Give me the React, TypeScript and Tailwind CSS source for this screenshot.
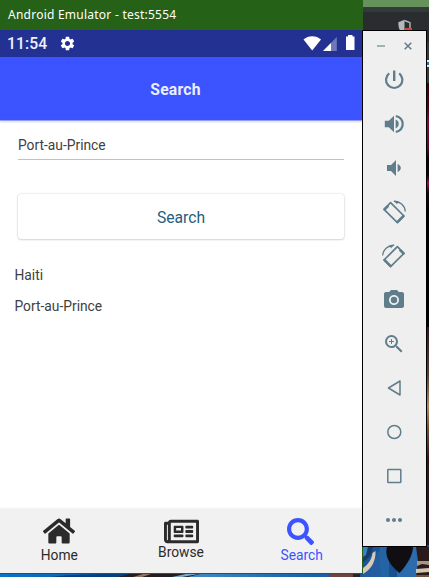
import type { ReactNode } from "react";
import { FaHome, FaRegNewspaper, FaSearch } from "react-icons/fa";
import { MdPhotoCamera, MdSettings, MdZoomIn } from "react-icons/md";

function Wallpaper() {
  return (
    <svg className="absolute inset-0" width="429" height="577" viewBox="0 0 429 577">
      <defs>
        <linearGradient id="sea" x1="0" x2="1" y1="0" y2="0">
          <stop offset="0" stopColor="#0b72c4" />
          <stop offset="0.28" stopColor="#0a5eaa" />
          <stop offset="0.4" stopColor="#4c8fc6" />
          <stop offset="0.7" stopColor="#1c63a8" />
          <stop offset="1" stopColor="#174a86" />
        </linearGradient>
        <linearGradient id="edge" x1="0" x2="0" y1="0" y2="1">
          <stop offset="0" stopColor="#3c0005" />
          <stop offset="0.1" stopColor="#4a0410" />
          <stop offset="0.16" stopColor="#7b0f3a" />
          <stop offset="0.27" stopColor="#5a0826" />
          <stop offset="0.31" stopColor="#0c0206" />
          <stop offset="0.38" stopColor="#0a0508" />
          <stop offset="0.41" stopColor="#9c1036" />
          <stop offset="0.45" stopColor="#16060a" />
          <stop offset="0.52" stopColor="#000000" />
          <stop offset="1" stopColor="#000000" />
        </linearGradient>
        <linearGradient id="wood" x1="0" x2="0" y1="0" y2="1">
          <stop offset="0" stopColor="#2c1c1c" />
          <stop offset="0.22" stopColor="#5a4034" />
          <stop offset="0.36" stopColor="#b08a62" />
          <stop offset="0.46" stopColor="#7a4e36" />
          <stop offset="0.6" stopColor="#34161a" />
          <stop offset="1" stopColor="#26161a" />
        </linearGradient>
      </defs>
      <rect width="429" height="577" fill="#000" />
      <rect x="360" width="69" height="7" fill="#64925a" />
      <rect x="360" y="7" width="69" height="5" fill="#34393c" />
      <rect x="360" y="12" width="69" height="71" fill="#292d30" />
      <rect x="427" y="42" width="2" height="41" fill="#343b40" />
      <rect x="427" y="60" width="2" height="7" fill="#e8f0e0" />
      <rect x="427" y="62" width="2" height="3" fill="#2a6cb0" />
      <rect x="427" y="83" width="2" height="244" fill="url(#edge)" />
      <rect x="427" y="327" width="2" height="220" fill="url(#wood)" />
      <path d="M398.300 22.300 404.500 19.800v11.200h-4c-1.500-2-2.200-4-2.200-8.700Z" fill="#b4b9bc" />
      <path d="M404.500 20.500 410 22.700v5.300" fill="none" stroke="#b4b9bc" strokeWidth="1.400" />
      <rect x="405" y="28" width="7" height="3" fill="#dd4438" />
      <rect y="545" width="429" height="32" fill="url(#sea)" />
      <path d="M50 577c25-3 48-3 75-3h12l-10 3Z" fill="#063f7d" />
      <path d="M118 577l12-3h70l-12 3Z" fill="#241c22" />
      <path d="M133 577l10-3h8l-9 3Z" fill="#8f7566" />
      <path d="M172 577l14-3h12l-16 3Z" fill="#7aa9d2" />
      <path d="M330 577v-3h23v3Z" fill="#6a4440" />
      <path d="M353 577v-3h7v3Z" fill="#27242c" />
      <path d="M363 547h10c-2 9-5 12-10 15Z" fill="#173a66" />
      <path d="M363 547h5l-2 8-3 2Z" fill="#3483c4" />
      <path d="M363 574c6-4 12-12 14-22l11-5v30h-25Z" fill="#245c9f" />
      <path d="M375.500 551c.5 10-4 18-12.500 23v-6c6-4 9-10 9.500-15Z" fill="#d9cbb8" />
      <path d="M380 547h9v30h-7c-3-8-3-20-2-30Z" fill="#2464a4" />
      <path d="M397 571c8-7 13-15 16-24h5v30h-21Z" fill="#2d6cac" />
      <path d="M387 547h26c0 8-6 18-13.500 26-5-4-16-14-12.500-26Z" fill="#100e12" />
      <path d="M416 547h13v30h-13l2-16Z" fill="#2b1a1b" />
      <path d="M417 561h12v4l-7-1-5 2Z" fill="#a69783" />
      <path d="M416 569l13-1v4l-13 1Z" fill="#d5c7b2" />
      <path d="M416 575h13v2h-13Z" fill="#75543f" />
    </svg>
  );
}

function StatusBar() {
  return (
    <div className="flex h-[27px] shrink-0 items-center bg-[#233193] px-[7px] text-white">
      <span className="w-[41px] whitespace-nowrap text-[15.7px] font-medium leading-[27px] tracking-[0.1px] text-[#f0f1fa]">11:54</span>
      <MdSettings className="ml-[11px] size-[17px]" />
      <div className="flex-1" />
      <svg width="52" height="20" viewBox="0 0 52 20">
        <path d="M.5 5.500C5 1 13.500 1 18 5.500L9.200 16.500Z" fill="#fff" />
        <path d="M20 17 33.800 3v14Z" fill="#6e77b8" />
        <path d="M20 17 28 9v8Z" fill="#fff" />
        <path d="M43 2.500h2V1h4.500v1.500h2V16H43Z" fill="#fff" />
      </svg>
    </div>
  );
}

function Tab({ icon, label, className }: { icon: ReactNode; label: string; className: string }) {
  return (
    <div className={"flex flex-1 flex-col items-center " + className}>
      {icon}
      <span className="text-[13.8px] leading-[16px]">{label}</span>
    </div>
  );
}

function Phone() {
  return (
    <div className="absolute left-0 top-0 flex h-[574px] w-[363px] flex-col border-b border-r border-[#286018] bg-white font-['Roboto',sans-serif]">
      <div className="flex h-[30px] shrink-0 items-center bg-[#256117] pl-2 font-['Noto_Sans',sans-serif] text-[12px] text-white">
        <span className="whitespace-nowrap tracking-[0.24px]">Android Emulator - test:5554</span>
      </div>
      <StatusBar />
      <header className="flex h-16 shrink-0 items-center justify-center border-b border-[#919dff] bg-[#3b54ff] pr-[11px] pt-[2px] text-[15.7px] font-bold text-[#eceeff] shadow-[0_1px_2px_rgba(0,0,0,0.15)]">
        <span className="tracking-[0.2px]">Search</span>
      </header>
      <main className="flex flex-1 flex-col text-[13.8px] leading-4 text-[#404040]">
        <div className="mx-[18px] mt-4 flex h-[23px] items-start border-b border-[#bec2c3]">Port-au-Prince</div>
        <button className="mx-[18px] mt-[34px] flex h-[45px] items-center justify-center rounded-[3px] bg-white pt-[2px] text-[15.7px] text-[#24607c] shadow-[0_0_2px_rgba(0,0,0,0.22),0_1px_2px_rgba(0,0,0,0.12)]">
          Search
        </button>
        <p className="ml-[14.5px] mt-[28px]">Haiti</p>
        <p className="ml-[14.5px] mt-[15px]">Port-au-Prince</p>
      </main>
      <nav className="flex h-[64px] shrink-0 bg-[#f1f1f1] text-[#2b2b2b] shadow-[0_-1px_2px_rgba(0,0,0,0.06)]">
        <Tab className="pr-[3px] pt-[6px]" label="Home" icon={<FaHome className="size-8" />} />
        <Tab className="pr-[2px] pt-[5px]" label="Browse" icon={<FaRegNewspaper className="-mb-[5px] size-[35px]" />} />
        <Tab className="pr-[1px] pt-[9px] text-[#3b54ff]" label="Search" icon={<FaSearch className="mb-[2px] size-[27px] -translate-x-px" />} />
      </nav>
    </div>
  );
}

function Glyph({ children, className = "" }: { children: ReactNode; className?: string }) {
  return (
    <svg className={"size-6 " + className} viewBox="0 0 24 24" fill="none" stroke="currentColor">
      {children}
    </svg>
  );
}

function Rotate({ flip = false }: { flip?: boolean }) {
  return (
    <Glyph className={flip ? "-scale-x-100" : ""}>
      <path d="M2 9.300 8.600 2.700 22 16 15.400 22.600Z" strokeWidth="1.700" strokeLinejoin="round" />
      <path d="M2.600 9.300 5.600 6.300M15.600 21.900 21.300 16.200" strokeWidth="2.600" strokeLinecap="round" />
      <path d="M11.800 1.300C17.500.8 23 5.500 23.300 11.500" strokeWidth="1.300" />
      <path d="M12 1.100 14.700 3.800 17 2.300Z" fill="currentColor" strokeWidth=".4" />
    </Glyph>
  );
}

function Tool({ children }: { children: ReactNode }) {
  return <div className="flex h-11 shrink-0 items-center justify-center">{children}</div>;
}

function Toolbar() {
  return (
    <aside className="absolute left-[362px] top-[30px] flex h-[517px] w-[65px] flex-col border border-black bg-[#efefef] text-[#607d8b]">
      <div className="flex h-[27px] shrink-0 items-center gap-[19px] pl-[14px] pt-[3px]">
        <div className="h-0.5 w-2 bg-[#a1b1b8]" />
        <svg width="8" height="8" viewBox="0 0 8 8" fill="none" stroke="currentColor" strokeWidth="1.500">
          <path d="M.7.7 7.300 7.300M7.300.7.7 7.300" />
        </svg>
      </div>
      <div className="flex flex-col pr-[2px]">
        <Tool>
          <Glyph>
            <path d="M12.200 2.500v10.500" strokeWidth="2.400" />
            <path d="M7.200 5.300a8.200 8.200 0 1 0 10 0" strokeWidth="2.200" />
          </Glyph>
        </Tool>
        <Tool>
          <Glyph>
            <path d="M2.800 8.700h4L12 3.700v16.600L6.800 15.300h-4Z" fill="currentColor" stroke="none" />
            <path d="M13.600 7.600c4.200 1.600 4.200 7.200 0 8.800Z" fill="currentColor" stroke="none" />
            <path d="M13.800 4c9.200 2.400 9.200 13.600 0 16" strokeWidth="2.200" />
          </Glyph>
        </Tool>
        <Tool>
          <Glyph>
            <path d="M5 9h4l5-5v16l-5-5H5Z" fill="currentColor" stroke="none" />
            <path d="M15.600 8c4.200 1.500 4.200 6.500 0 8Z" fill="currentColor" stroke="none" />
          </Glyph>
        </Tool>
        <Tool><Rotate /></Tool>
        <Tool><Rotate flip /></Tool>
        <Tool><MdPhotoCamera className="size-6" /></Tool>
        <Tool><MdZoomIn className="size-6" /></Tool>
        <Tool>
          <Glyph>
            <path d="M18 5v14L6.500 12Z" strokeWidth="1.500" strokeLinejoin="round" />
          </Glyph>
        </Tool>
        <Tool>
          <Glyph>
            <circle cx="12.300" cy="12" r="6.500" strokeWidth="1.500" />
          </Glyph>
        </Tool>
        <Tool>
          <Glyph>
            <rect x="5.800" y="5.500" width="13" height="13" rx=".6" strokeWidth="1.500" />
          </Glyph>
        </Tool>
        <Tool>
          <div className="flex gap-[2px]">
            <div className="size-1 rounded-full bg-current" />
            <div className="size-1 rounded-full bg-current" />
            <div className="size-1 rounded-full bg-current" />
          </div>
        </Tool>
      </div>
    </aside>
  );
}

export default function App() {
  return (
    <div className="relative h-[577px] w-[429px] overflow-hidden">
      <Wallpaper />
      <Phone />
      <Toolbar />
    </div>
  );
}
